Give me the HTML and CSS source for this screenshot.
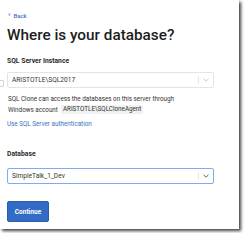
FILE: index.html
```html
<!DOCTYPE html>
<html>
<head>
<meta charset="utf-8">
<link rel="stylesheet" href="styles.css">
</head>
<body>
<div class="frame">
  <span class="edge-icon"></span>
  <div class="content">
    <a class="back" href="#"><span class="chev">&lsaquo;</span>Back</a>
    <h1 class="title">Where is your database?</h1>
    <div class="label">SQL Server Instance</div>
    <div class="select">
      <span class="value">ARISTOTLE\SQL2017</span>
      <span class="sep"></span>
      <svg class="arrow" width="6" height="4" viewBox="0 0 6 4"><path d="M0.5 0.8 L3 3.2 L5.5 0.8" fill="none" stroke="#c4c4c4" stroke-width="0.9"/></svg>
    </div>
    <div class="info">
      <span class="line">SQL Clone can access the databases on this server through</span>
      <span class="line"><span>Windows account</span><code class="code">ARISTOTLE\SQLCloneAgent</code></span>
    </div>
    <a class="link" href="#">Use SQL Server authentication</a>
    <div class="label db">Database</div>
    <div class="select focus">
      <span class="value">SimpleTalk_1_Dev</span>
      <span class="sep"></span>
      <svg class="arrow" width="6" height="4" viewBox="0 0 6 4"><path d="M0.5 0.8 L3 3.2 L5.5 0.8" fill="none" stroke="#666" stroke-width="1"/></svg>
    </div>
    <button class="btn">Continue</button>
  </div>
</div>
</body>
</html>
```
FILE: styles.css
```css
html, body { margin: 0; padding: 0; background: #fff; }
body { width: 244px; height: 233px; overflow: hidden; font-family: Roboto, "Liberation Sans", sans-serif; }
.frame {
  position: relative;
  width: 239px; height: 229px;
  background: #fff;
  box-shadow: 2px 2px 3px rgba(0,0,0,0.75);
}
.edge-icon {
  position: absolute; left: -3px; top: 80px;
  width: 5px; height: 5px;
  border: 1px solid #d2d2d2; border-radius: 1px;
}
.content { padding: 10px 0 0 7px; display: flex; flex-direction: column; align-items: flex-start; }
.back { font-size: 6px; color: #3a72c4; text-decoration: none; font-weight: 500; display: flex; align-items: center; height: 10px; }
.chev { font-size: 8px; margin: 0 3px 0 1px; position: relative; top: -1px; }
.title { margin: 6px 0 0 0; font-size: 15.3px; font-weight: 500; color: #1d1d1d; line-height: 19px; }
.label { margin-top: 12px; font-size: 6.8px; font-weight: 700; color: #2a2a2a; line-height: 9px; }
.label.db { margin-top: 22px; }
.select {
  margin-top: 6px; width: 207px; height: 16px; box-sizing: border-box;
  border: 1px solid #e4e4e4; border-radius: 2px;
  display: flex; align-items: center;
}
.select.focus { border-color: #79aef0; margin-top: 9px; }
.value { flex: 1; padding-left: 4px; font-size: 6.6px; color: #333; }
.sep { width: 1px; height: 8px; background: #e8e8e8; }
.arrow { margin: 0 4px 0 4px; }
.info { margin: 5px 0 0 1px; display: flex; flex-direction: column; font-size: 6.3px; color: #333; }
.line { display: flex; align-items: center; height: 11px; gap: 3px; }
.code {
  height: 9px; line-height: 9px;
  font-family: Roboto, "Liberation Sans", sans-serif; background: #f1f1f1;
  padding: 0 2px; font-size: 6.3px;
}
.link { margin-top: 5px; font-size: 6.3px; color: #3a72c4; text-decoration: none; }
.btn {
  margin-top: 17px; width: 42px; height: 21px;
  background: #326cc6; border: 1px solid #2a5cae; border-radius: 2px;
  color: #fff; font-family: Roboto, "Liberation Sans", sans-serif; font-size: 6.5px; font-weight: 700; padding: 0;
}
```
